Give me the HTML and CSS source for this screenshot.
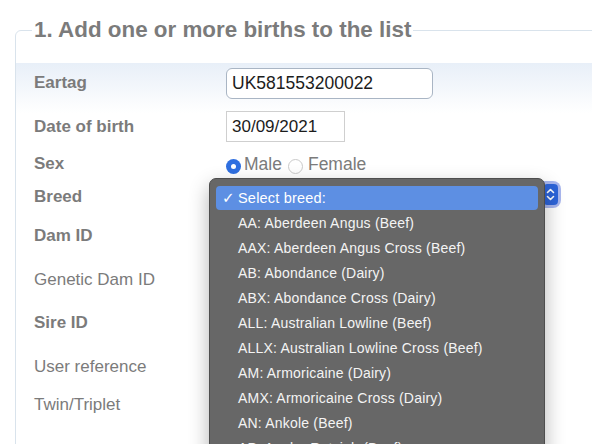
FILE: index.html
```html
<!DOCTYPE html>
<html lang="en">
<head>
<meta charset="utf-8">
<title>Add births</title>
<link rel="stylesheet" href="styles.css">
</head>
<body>
<fieldset class="births">
  <legend class="births-title">1. Add one or more births to the list</legend>
  <div class="form-body">
    <div class="row row-eartag">
      <label class="lbl lbl-strong">Eartag</label>
      <input class="field field-eartag" type="text" value="UK581553200022">
    </div>
    <div class="row row-dob">
      <label class="lbl lbl-strong">Date of birth</label>
      <input class="field field-dob" type="text" value="30/09/2021">
    </div>
    <div class="row row-sex">
      <label class="lbl lbl-strong">Sex</label>
      <div class="radios">
        <span class="radio radio-on"><span class="radio-dot"></span></span>
        <span class="radio-text">Male</span>
        <span class="radio radio-off"></span>
        <span class="radio-text">Female</span>
      </div>
    </div>
    <div class="row row-breed">
      <label class="lbl lbl-strong">Breed</label>
      <div class="select">
        <span class="stepper">
          <svg class="stepper-icon" width="15" height="21" viewBox="0 0 15 21"><path d="M4.5 8.5 L7.5 5.5 L10.5 8.5 M4.5 12.5 L7.5 15.5 L10.5 12.5" fill="none" stroke="#fff" stroke-width="1.6" stroke-linecap="round" stroke-linejoin="round"/></svg>
        </span>
      </div>
    </div>
    <div class="row row-dam">
      <label class="lbl lbl-strong">Dam ID</label>
    </div>
    <div class="row row-gdam">
      <label class="lbl">Genetic Dam ID</label>
    </div>
    <div class="row row-sire">
      <label class="lbl lbl-strong">Sire ID</label>
    </div>
    <div class="row row-user">
      <label class="lbl">User reference</label>
    </div>
    <div class="row row-twin">
      <label class="lbl">Twin/Triplet</label>
    </div>
  </div>
</fieldset>

<div class="menu">
  <div class="menu-item menu-item-selected"><span class="check">✓</span>Select breed:</div>
  <div class="menu-item">AA: Aberdeen Angus (Beef)</div>
  <div class="menu-item">AAX: Aberdeen Angus Cross (Beef)</div>
  <div class="menu-item">AB: Abondance (Dairy)</div>
  <div class="menu-item">ABX: Abondance Cross (Dairy)</div>
  <div class="menu-item">ALL: Australian Lowline (Beef)</div>
  <div class="menu-item">ALLX: Australian Lowline Cross (Beef)</div>
  <div class="menu-item">AM: Armoricaine (Dairy)</div>
  <div class="menu-item">AMX: Armoricaine Cross (Dairy)</div>
  <div class="menu-item">AN: Ankole (Beef)</div>
  <div class="menu-item">AP: Angler Rotvieh (Beef)</div>
</div>
</body>
</html>
```
FILE: styles.css
```css
html, body {
  margin: 0;
  height: 444px;
  overflow: hidden;
  background: #fff;
  font-family: "Liberation Sans", Arial, sans-serif;
}

body {
  position: relative;
}

.births {
  margin: 17px -30px 0 15px;
  padding: 0 0 40px;
  border: 1px solid #d9e3ec;
  border-radius: 6px;
  min-width: 0;
}

.births-title {
  margin-left: 16px;
  padding: 0 2px;
  font-size: 22.4px;
  line-height: 26px;
  font-weight: bold;
  color: #7b7b7b;
}

.form-body {
  margin-top: 20px;
  padding-left: 18px;
  background: linear-gradient(#e8eff8, #ffffff 50px);
}

.row {
  display: flex;
  align-items: center;
}

.row-eartag { height: 40px; }
.row-dob { height: 47px; }
.row-sex { height: 28px; }
.row-breed { height: 38px; }
.row-dam { height: 40px; }
.row-gdam { height: 48px; }
.row-sire { height: 38px; }
.row-user { height: 50px; }
.row-twin { height: 26px; }

.lbl {
  flex: none;
  width: 192px;
  font-size: 17px;
  line-height: 20px;
  color: #7b7b7b;
}

.lbl-strong {
  font-weight: bold;
}

.field {
  box-sizing: border-box;
  height: 31px;
  margin: 0;
  padding: 0 5px;
  font-family: "Liberation Sans", Arial, sans-serif;
  font-size: 17.5px;
  color: #1c1c1c;
  background: #fff;
  outline: none;
}

.field-eartag {
  width: 207px;
  border: 1px solid #a9b5c4;
  border-radius: 6px;
}

.field-dob {
  width: 119px;
  border: 1px solid #cfcfcf;
  border-radius: 0;
  font-size: 17px;
}

.radios {
  display: flex;
  align-items: center;
  font-size: 17.5px;
  color: #7b7b7b;
}

.radio {
  box-sizing: border-box;
  width: 15px;
  height: 15px;
  margin-top: 4px;
  border-radius: 50%;
  flex: none;
}

.radio-on {
  display: grid;
  place-items: center;
  background: #2f6fe0;
}

.radio-dot {
  width: 5px;
  height: 5px;
  border-radius: 50%;
  background: #fff;
}

.radio-off {
  border: 1px solid #cacaca;
  background: #fff;
  margin-left: 6px;
}

.radio-text {
  margin-left: 3px;
}

.radio-off + .radio-text {
  margin-left: 5px;
}

.select {
  box-sizing: border-box;
  width: 331px;
  height: 21px;
  margin-top: -6px;
  margin-left: 1px;
  border-radius: 5px;
  background: #fff;
  box-shadow: 0 0 0 3px #a9b7ee;
  display: flex;
  justify-content: flex-end;
}

.stepper {
  width: 15px;
  height: 21px;
  border-radius: 4px;
  background: #2d64d9;
}

.stepper-icon {
  display: block;
}

.menu {
  position: absolute;
  left: 209px;
  top: 178px;
  width: 336px;
  height: 320px;
  box-sizing: border-box;
  padding: 7px 6px;
  background: #676767;
  border: 1px solid #4e4e4e;
  border-radius: 7px;
  box-shadow: 0 8px 20px rgba(0, 0, 0, 0.3);
  font-family: "Liberation Sans", Arial, sans-serif;
  font-size: 14px;
  letter-spacing: 0.2px;
  color: #f4f4f4;
}

.menu-item {
  height: 25px;
  line-height: 25px;
  padding-left: 22px;
  white-space: nowrap;
}

.menu-item-selected {
  height: 24px;
  line-height: 24px;
  margin-bottom: 1px;
  padding-left: 6px;
  border-radius: 4px;
  background: #5d8fe3;
  color: #fff;
  font-size: 14.5px;
}

.check {
  display: inline-block;
  width: 16px;
  font-family: "DejaVu Sans", sans-serif;
  font-size: 15px;
  font-weight: bold;
}
```
